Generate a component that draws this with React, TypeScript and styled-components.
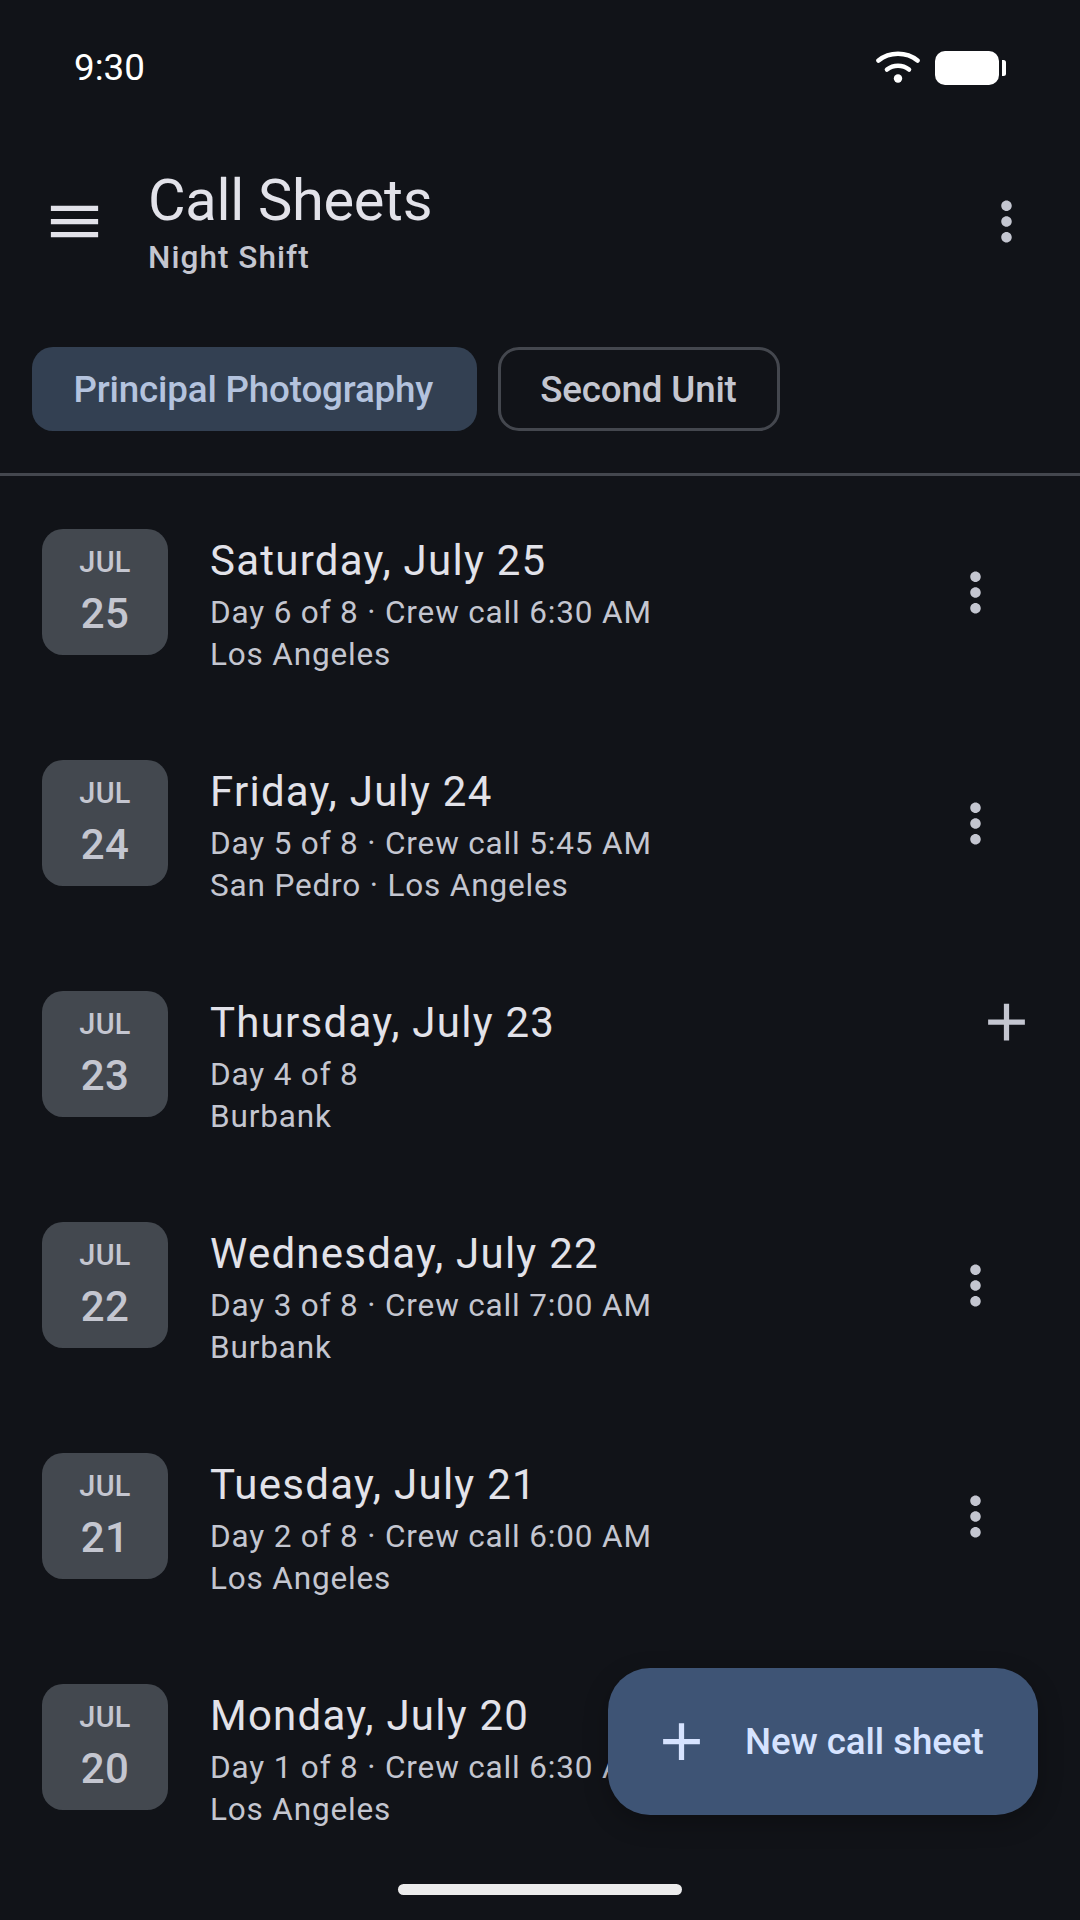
import React from "react";
import styled, { createGlobalStyle } from "styled-components";

const Global = createGlobalStyle`
  html, body { margin: 0; padding: 0; background: #111318; }
  * { box-sizing: border-box; }
`;

const Screen = styled.div`
  position: relative;
  width: 1080px;
  height: 1920px;
  overflow: hidden;
  background: #111318;
  font-family: Roboto, "Noto Sans", sans-serif;
  display: flex;
  flex-direction: column;
`;

const StatusBar = styled.div`
  height: 136px;
  padding: 0 75px 0 74px;
  display: flex;
  align-items: center;
  justify-content: space-between;
  flex-shrink: 0;
`;

const Clock = styled.span`
  color: #fff;
  font-size: 36.75px;
  line-height: 1;
`;

const StatusIcons = styled.div`
  display: flex;
  align-items: center;
  gap: 15px;
  margin-right: -1px;
`;

const AppBar = styled.header`
  height: 174px;
  padding: 0 42px;
  display: flex;
  align-items: center;
  flex-shrink: 0;
`;

const MenuGlyph = styled.svg`
  width: 63px;
  height: 63px;
  fill: #e2e2e9;
  margin: -4px 0 0 1px;
  display: block;
  flex-shrink: 0;
`;

const TitleBlock = styled.div`
  flex: 1;
  margin-left: 42px;
  display: flex;
  flex-direction: column;
`;

const Title = styled.h1`
  margin: 0;
  font-size: 57.75px;
  font-weight: 400;
  line-height: 68px;
  letter-spacing: -0.3px;
  color: #e2e2e9;
  transform: translateY(-2px);
`;

const Subtitle = styled.div`
  font-size: 31.5px;
  font-weight: 500;
  line-height: 42px;
  letter-spacing: 1.05px;
  color: #c4c6d0;
  transform: translateY(1px);
`;

const IconGlyph = styled.svg<{ $color?: string }>`
  width: 63px;
  height: 63px;
  fill: ${(p) => p.$color ?? "#c4c6d0"};
  display: block;
  flex-shrink: 0;
`;

const TopMore = styled.div`
  margin-top: -4px;
`;

const ChipRow = styled.div`
  margin-top: 37px;
  padding: 0 31.5px 42px;
  display: flex;
  gap: 21px;
  border-bottom: 3px solid #44474e;
  flex-shrink: 0;
`;

const Chip = styled.div<{ $selected?: boolean }>`
  height: 84px;
  padding: ${(p) => (p.$selected ? "0 44px 0 42px" : "0 40px 0 39px")};
  display: flex;
  align-items: center;
  border-radius: 21px;
  font-size: 36.75px;
  font-weight: 500;
  letter-spacing: -0.17px;
  color: ${(p) => (p.$selected ? "#b4c3de" : "#c4c6d0")};
  background: ${(p) => (p.$selected ? "#334052" : "transparent")};
  border: ${(p) => (p.$selected ? "none" : "3px solid #44474e")};
`;

const List = styled.div`
  display: flex;
  flex-direction: column;
`;

const Row = styled.div`
  height: 231px;
  padding: 0 42px;
  display: flex;
  align-items: center;
  gap: 42px;
`;

const DateTile = styled.div`
  width: 126px;
  height: 126px;
  border-radius: 21px;
  background: #43484f;
  color: #c4c6d0;
  display: flex;
  flex-direction: column;
  align-items: center;
  justify-content: center;
  flex-shrink: 0;
`;

const Month = styled.div`
  font-size: 28.875px;
  font-weight: 500;
  line-height: 42px;
  letter-spacing: 0.3px;
  transform: translateY(-3px);
`;

const DayNum = styled.div`
  font-size: 42px;
  font-weight: 500;
  line-height: 52px;
  margin-top: 2px;
  letter-spacing: 0.3px;
`;

const RowText = styled.div`
  flex: 1;
  min-width: 0;
  padding-top: 22px;
  display: flex;
  flex-direction: column;
`;

const RowTitle = styled.div`
  font-size: 42px;
  line-height: 63px;
  letter-spacing: 1.25px;
  color: #e2e2e9;
`;

const RowLine = styled.div`
  font-size: 31.5px;
  line-height: 42px;
  letter-spacing: 0.84px;
  color: #c4c6d0;
`;

const RowAction = styled.div<{ $raised?: boolean }>`
  flex-shrink: 0;
  margin-right: ${(p) => (p.$raised ? "0" : "31px")};
  transform: ${(p) => (p.$raised ? "translateY(-31.5px)" : "translateY(1px)")};
`;

const Fab = styled.div`
  position: absolute;
  right: 42px;
  top: 1668px;
  width: 430px;
  height: 147px;
  padding-left: 42px;
  border-radius: 42px;
  background: #3e5475;
  color: #d6e3ff;
  display: flex;
  align-items: center;
  gap: 32px;
  box-shadow: 0 8px 24px rgba(0, 0, 0, 0.25);
  font-size: 36.75px;
  font-weight: 500;
  letter-spacing: -0.1px;
`;

const HomeBar = styled.div`
  position: absolute;
  left: 398px;
  top: 1884px;
  width: 284px;
  height: 10.5px;
  border-radius: 6px;
  background: #ececec;
`;

const MENU = "M3 18h18v-2H3v2zm0-5h18v-2H3v2zm0-7v2h18V6H3z";
const ADD = "M19 13h-6v6h-2v-6H5v-2h6V5h2v6h6v2z";
const MORE =
  "M12 8c1.1 0 2-.9 2-2s-.9-2-2-2-2 .9-2 2 .9 2 2 2zm0 2c-1.1 0-2 .9-2 2s.9 2 2 2 2-.9 2-2-.9-2-2-2zm0 6c-1.1 0-2 .9-2 2s.9 2 2 2 2-.9 2-2-.9-2-2-2z";

const Icon = ({ d, color }: { d: string; color?: string }) => (
  <IconGlyph viewBox="0 0 24 24" $color={color}>
    <path d={d} />
  </IconGlyph>
);

const Wifi = () => (
  <svg width="44" height="34" viewBox="0 0 44 34" fill="none" style={{ display: "block" }}>
    <path d="M2.5 9.5C13.5 0.5 30.5 0.5 41.5 9.5" stroke="#fff" strokeWidth="4.6" strokeLinecap="round" />
    <path d="M11 18.5C17.5 13.5 26.5 13.5 33 18.5" stroke="#fff" strokeWidth="4.6" strokeLinecap="round" />
    <circle cx="22" cy="27.5" r="4.2" fill="#fff" />
  </svg>
);

const Battery = () => (
  <svg width="71" height="34" viewBox="0 0 71 34" style={{ display: "block" }}>
    <rect x="0" y="0" width="64" height="34" rx="10" fill="#fff" />
    <path d="M67 9h1.5a2.5 2.5 0 0 1 2.5 2.5v11a2.5 2.5 0 0 1-2.5 2.5H67z" fill="#fff" />
  </svg>
);

const rows = [
  { d: "25", t: "Saturday, July 25", a: "Day 6 of 8 · Crew call 6:30 AM", b: "Los Angeles" },
  { d: "24", t: "Friday, July 24", a: "Day 5 of 8 · Crew call 5:45 AM", b: "San Pedro · Los Angeles" },
  { d: "23", t: "Thursday, July 23", a: "Day 4 of 8", b: "Burbank", add: true },
  { d: "22", t: "Wednesday, July 22", a: "Day 3 of 8 · Crew call 7:00 AM", b: "Burbank" },
  { d: "21", t: "Tuesday, July 21", a: "Day 2 of 8 · Crew call 6:00 AM", b: "Los Angeles" },
  { d: "20", t: "Monday, July 20", a: "Day 1 of 8 · Crew call 6:30 AM", b: "Los Angeles" },
];

export default function App() {
  return (
    <Screen>
      <Global />
      <StatusBar>
        <Clock>9:30</Clock>
        <StatusIcons>
          <Wifi />
          <Battery />
        </StatusIcons>
      </StatusBar>
      <AppBar>
        <MenuGlyph viewBox="0 0 24 24">
          <path d={MENU} />
        </MenuGlyph>
        <TitleBlock>
          <Title>Call Sheets</Title>
          <Subtitle>Night Shift</Subtitle>
        </TitleBlock>
        <TopMore>
          <Icon d={MORE} />
        </TopMore>
      </AppBar>
      <ChipRow>
        <Chip $selected>Principal Photography</Chip>
        <Chip>Second Unit</Chip>
      </ChipRow>
      <List>
        {rows.map((r) => (
          <Row key={r.d}>
            <DateTile>
              <Month>JUL</Month>
              <DayNum>{r.d}</DayNum>
            </DateTile>
            <RowText>
              <RowTitle>{r.t}</RowTitle>
              <RowLine>{r.a}</RowLine>
              <RowLine>{r.b}</RowLine>
            </RowText>
            <RowAction $raised={r.add}>
              <Icon d={r.add ? ADD : MORE} />
            </RowAction>
          </Row>
        ))}
      </List>
      <Fab>
        <Icon d={ADD} color="#d6e3ff" />
        New call sheet
      </Fab>
      <HomeBar />
    </Screen>
  );
}
